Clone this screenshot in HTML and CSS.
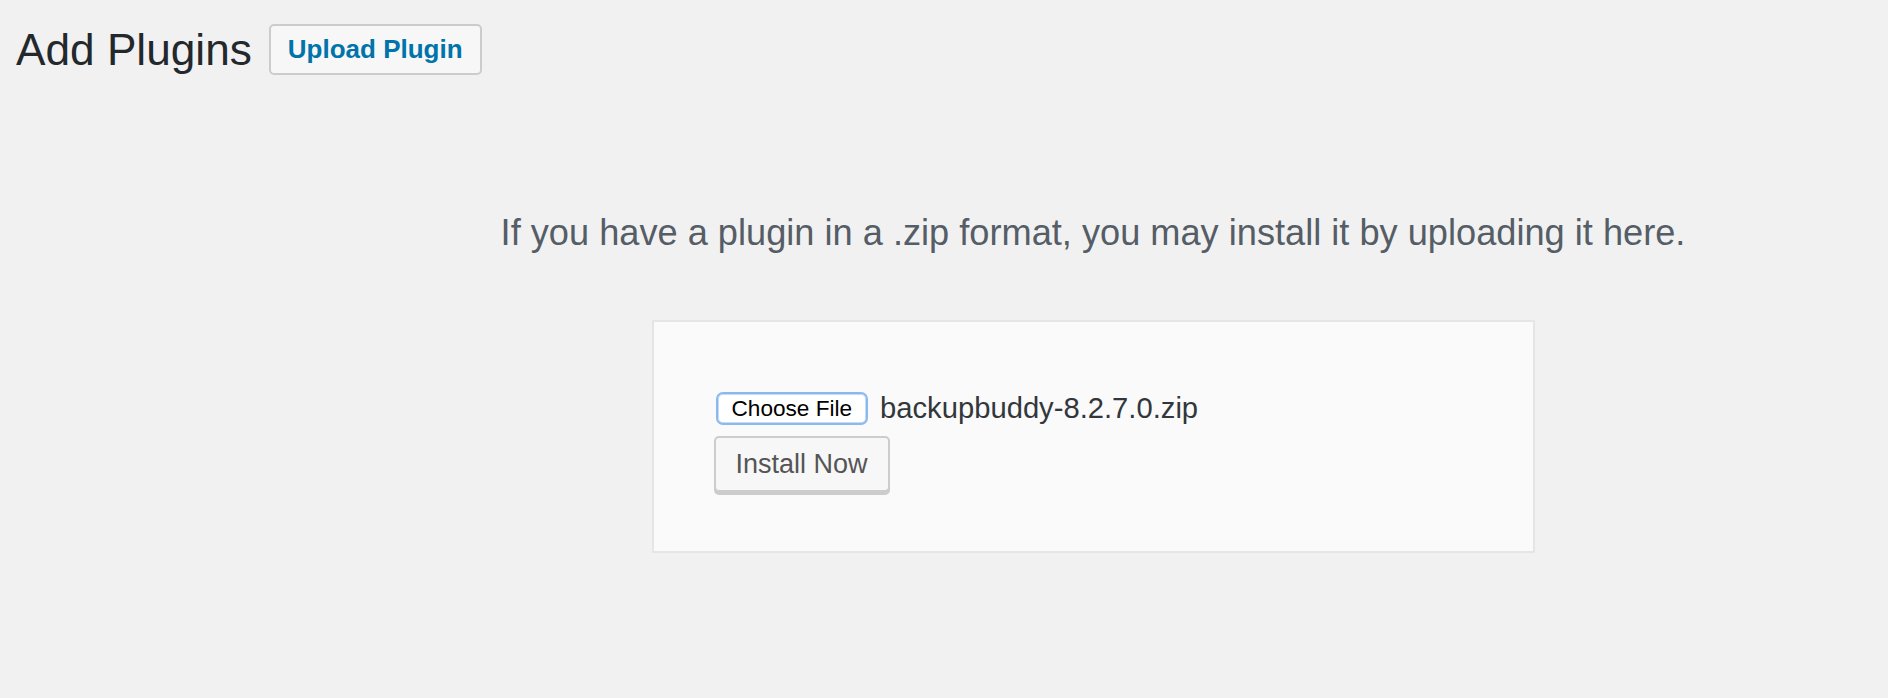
FILE: index.html
```html
<!DOCTYPE html>
<html lang="en">
<head>
<meta charset="utf-8">
<title>Add Plugins</title>
<link rel="stylesheet" href="styles.css">
</head>
<body>
<div class="wrap">
  <div class="header">
    <h1 class="title">Add Plugins</h1>
    <a class="upload-btn" href="#">Upload Plugin</a>
  </div>
  <div class="upload-area">
    <p class="help">If you have a plugin in a .zip format, you may install it by uploading it here.</p>
    <form class="card">
      <div class="file-row">
        <span class="choose-btn">Choose File</span>
        <span class="filename">backupbuddy-8.2.7.0.zip</span>
      </div>
      <div class="install-row">
        <span class="install-btn">Install Now</span>
      </div>
    </form>
  </div>
</div>
</body>
</html>
```

FILE: styles.css
```css
html, body {
  margin: 0;
  padding: 0;
  background: #f1f1f1;
}
body {
  font-family: "Liberation Sans", Arial, sans-serif;
  width: 1888px;
  height: 698px;
  overflow: hidden;
}
.wrap {
  padding: 24px 0 0 16px;
}
.header {
  display: flex;
  align-items: center;
  gap: 17px;
  height: 51px;
}
.title {
  margin: 0;
  font-size: 44.2px;
  font-weight: 400;
  line-height: 44px;
  color: #23282d;
}
.upload-btn {
  display: flex;
  align-items: center;
  box-sizing: border-box;
  height: 51px;
  padding: 0 17px;
  border: 2px solid #cccccc;
  border-radius: 5px;
  background: #f7f7f7;
  color: #0073aa;
  font-size: 26px;
  font-weight: 700;
  text-decoration: none;
}
.upload-area {
  padding-left: 282px;
  text-align: center;
}
.help {
  margin: 133px 0 0 0;
  font-size: 36.2px;
  line-height: 49px;
  color: #555d66;
}
.card {
  box-sizing: border-box;
  width: 883px;
  margin: 63px auto 0;
  padding: 70px 62px 59px;
  border: 2px solid #e5e5e5;
  background: #fafafa;
  text-align: left;
}
.file-row {
  display: flex;
  align-items: center;
  gap: 12px;
  height: 33px;
}
.choose-btn {
  display: flex;
  align-items: center;
  box-sizing: border-box;
  height: 33px;
  padding: 0 14px;
  border: 2px solid #8ab8ef;
  box-shadow: inset 0 0 0 1px #c2dbf7;
  border-radius: 7px;
  background: #ffffff;
  color: #000000;
  font-size: 22.6px;
}
.filename {
  font-size: 29.2px;
  color: #32373c;
}
.install-row {
  display: flex;
  margin: 11px 0 0 -2px;
}
.install-btn {
  display: flex;
  align-items: center;
  box-sizing: border-box;
  height: 56px;
  padding: 0 20px;
  border: 2px solid #cccccc;
  border-radius: 5px;
  background: #f7f7f7;
  box-shadow: 0 3px 0 #cccccc;
  color: #555555;
  font-size: 27px;
}
```
